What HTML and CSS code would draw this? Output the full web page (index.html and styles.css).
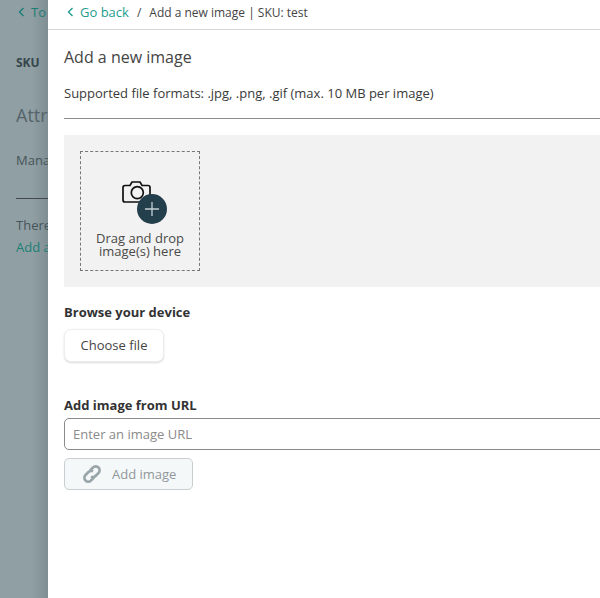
FILE: index.html
```html
<!DOCTYPE html>
<html lang="en">
<head>
  <meta charset="UTF-8">
  <title>Add a new image</title>
  <link rel="stylesheet" href="styles.css">
</head>
<body>
  <div class="page">
    <div class="backdrop">
      <div class="back-top"><svg class="chev-icon" width="7" height="10" viewBox="0 0 7 10"><path d="M5.5 1 L1.5 5 L5.5 9" fill="none" stroke="#1c7f76" stroke-width="1.4"/></svg>To products</div>
      <div class="back-sku">SKU</div>
      <div class="back-title">Attributes</div>
      <div class="back-manage">Manage attributes</div>
      <div class="back-rule"></div>
      <div class="back-text">There are no attributes</div>
      <div class="back-link">Add an attribute</div>
    </div>

    <div class="drawer">
      <div class="crumbs">
        <a class="go-back"><svg class="chev-icon" width="7" height="10" viewBox="0 0 7 10"><path d="M5.5 1 L1.5 5 L5.5 9" fill="none" stroke="#1f9d8e" stroke-width="1.4"/></svg>Go back</a>
        <span class="sep">/</span>
        <span class="crumb-text">Add a new image | SKU: test</span>
      </div>
      <div class="content">
        <h2>Add a new image</h2>
        <p class="formats">Supported file formats: .jpg, .png, .gif (max. 10 MB per image)</p>

        <div class="drop-area">
          <div class="drop-box">
            <div class="drop-icon">
              <svg width="46" height="46" viewBox="0 0 46 46">
                <path d="M2 7.5 a2 2 0 0 1 2-2 h5 l2-3.5 h8 l2 3.5 h6 a2 2 0 0 1 2 2 v12.5 a2 2 0 0 1-2 2 h-23 a2 2 0 0 1-2-2 z" fill="#f2f2f2" stroke="#111" stroke-width="1.7"/>
                <circle cx="16.3" cy="12.7" r="6" fill="none" stroke="#111" stroke-width="1.7"/>
                <circle cx="31" cy="29" r="15" fill="#233f4b"/>
                <path d="M31 22 v14 M24 29 h14" stroke="#c4d0d4" stroke-width="1.3"/>
              </svg>
            </div>
            <div class="drop-text">Drag and drop<br>image(s) here</div>
          </div>
        </div>

        <div class="label browse-label">Browse your device</div>
        <button class="choose-btn">Choose file</button>

        <div class="label url-label">Add image from URL</div>
        <input class="url-input" type="text" placeholder="Enter an image URL">
        <button class="add-btn">
          <svg width="20" height="20" viewBox="0 0 20 20" fill="none" stroke="#9aa5a9" stroke-width="2.6">
            <path d="M8 6.5 L11 3.5 a3.6 3.6 0 0 1 5.5 5.5 L13.5 12 a3.6 3.6 0 0 1-4.5 .5"/>
            <path d="M12 13.5 L9 16.5 a3.6 3.6 0 0 1-5.5-5.5 L6.5 8 a3.6 3.6 0 0 1 4.5-.5"/>
          </svg>
          Add image
        </button>
      </div>
    </div>
  </div>
</body>
</html>
```

FILE: styles.css
```css
* {
  box-sizing: border-box;
}
body {
  margin: 0;
  font-family: "Open Sans", Arial, sans-serif;
  color: #333;
  overflow: hidden;
}
.page {
  display: flex;
  width: 600px;
  height: 598px;
  overflow: hidden;
}
.backdrop {
  width: 48px;
  flex-shrink: 0;
  overflow: hidden;
  white-space: nowrap;
  background: linear-gradient(to right, #909fa4 0, #909fa4 32px, #7f8e93 48px);
  padding-left: 16px;
  color: #46555a;
  font-size: 13px;
}
.back-top {
  margin-left: 2px;
  padding-top: 3px;
  height: 29px;
  color: #1c7f76;
  font-size: 13px;
}
.back-sku {
  margin-top: 25px;
  font-weight: 700;
  font-size: 12px;
  color: #36454a;
}
.back-title {
  margin-top: 32px;
  font-size: 18px;
  line-height: 24px;
  color: #55646a;
}
.back-manage {
  margin-top: 24px;
  font-size: 13px;
}
.back-rule {
  margin-top: 29px;
  height: 1px;
  width: 100px;
  background: #40494d;
}
.back-text {
  margin-top: 17px;
  line-height: 18px;
}
.back-link {
  margin-top: 4px;
  line-height: 18px;
  color: #1c7f76;
}
.drawer {
  flex: 1;
  min-width: 0;
  background: #fff;
}
.crumbs {
  display: flex;
  align-items: center;
  height: 30px;
  padding: 0 0 5px 19px;
  border-bottom: 1px solid #d8d8d8;
  font-size: 12px;
  color: #444;
}
.go-back {
  color: #1f9d8e;
  font-size: 13px;
}
.chev-icon {
  margin-right: 6px;
}
.sep {
  margin: 0 8px;
}
.content {
  padding: 0 0 0 16px;
}
h2 {
  margin: 16px 0 0;
  font-size: 16px;
  font-weight: 400;
  line-height: 22px;
  color: #444;
}
.formats {
  margin: 16px 0 0;
  font-size: 13px;
  line-height: 18px;
  padding-bottom: 16px;
  border-bottom: 1px solid #8c8c8c;
  color: #3a3a3a;
}
.drop-area {
  margin-top: 16px;
  height: 152px;
  padding: 16px;
  background: #f2f2f2;
}
.drop-box {
  width: 120px;
  height: 120px;
  padding-top: 28px;
  border: 1px dashed #777;
  text-align: center;
}
.drop-icon {
  height: 44px;
  padding-left: 7px;
  line-height: 0;
}
.drop-text {
  margin-top: 8px;
  font-size: 13px;
  line-height: 13px;
  color: #4a4a4a;
}
.label {
  font-size: 13px;
  font-weight: 700;
  line-height: 18px;
  color: #333;
}
.browse-label {
  margin-top: 16px;
}
.choose-btn {
  display: block;
  margin-top: 8px;
  width: 100px;
  height: 33px;
  padding: 0 0 2px;
  background: #fff;
  border: 1px solid #eee;
  border-radius: 7px;
  box-shadow: 0 1px 2px rgba(0, 0, 0, 0.15);
  font-family: inherit;
  font-size: 13px;
  color: #444;
}
.url-label {
  margin-top: 34px;
}
.url-input {
  display: block;
  margin-top: 4px;
  width: 560px;
  height: 32px;
  padding: 0 8px;
  border: 1px solid #8a8a8a;
  border-radius: 5px;
  font-family: inherit;
  font-size: 13px;
}
.url-input::placeholder {
  color: #8a8a8a;
}
.add-btn {
  display: flex;
  align-items: center;
  gap: 10px;
  margin-top: 8px;
  width: 129px;
  height: 32px;
  padding: 0 0 0 17px;
  background: #f5f8f9;
  border: 1px solid #c9ced0;
  border-radius: 5px;
  font-family: inherit;
  font-size: 13px;
  color: #8f979a;
}
```
